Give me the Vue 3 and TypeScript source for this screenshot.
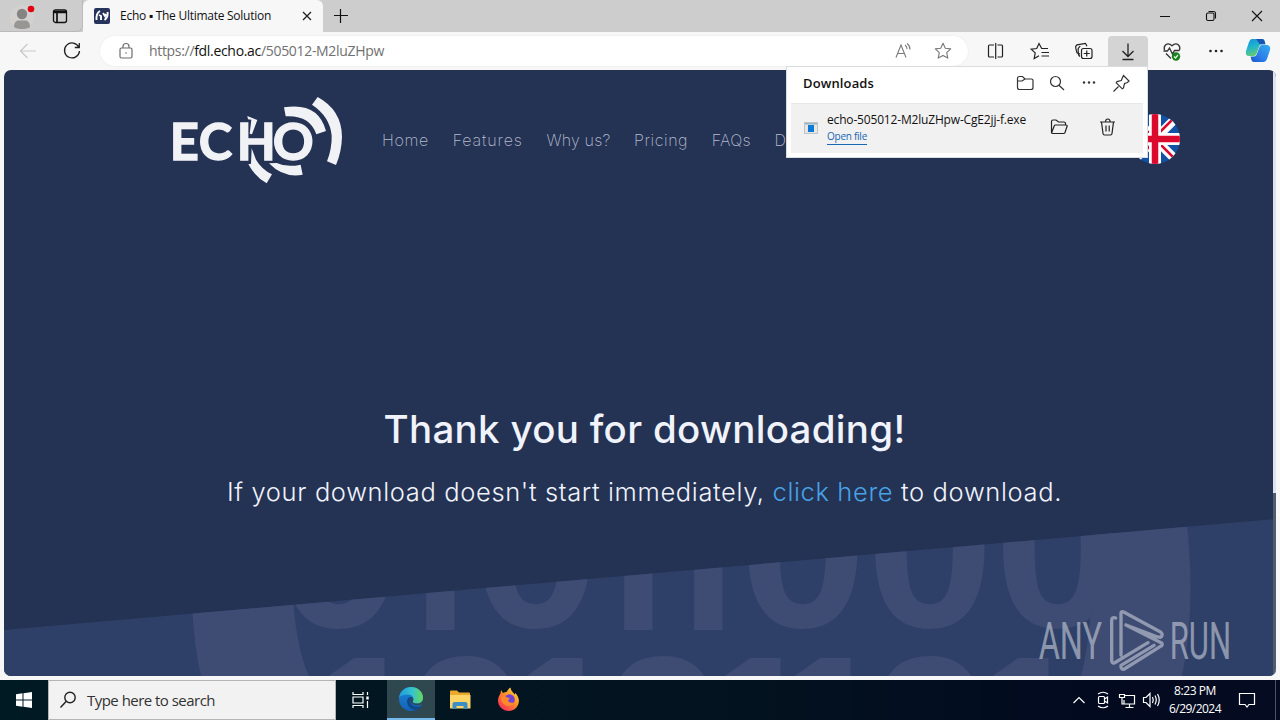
<script setup lang="ts">
import type { Directive } from 'vue'

// Tracks text so that the label spans the given number of pixels.
const vFit: Directive<HTMLElement, number> = {
  mounted(el, binding) {
    const count = (el.textContent ?? '').trim().length
    const natural = el.getBoundingClientRect().width
    const spacing = (binding.value - natural) / count
    el.style.letterSpacing = `${spacing.toFixed(3)}px`
  },
}

interface NavItem {
  label: string
  width: number
}

const nav: NavItem[] = [
  { label: 'Home', width: 47 },
  { label: 'Features', width: 70 },
  { label: 'Why us?', width: 64 },
  { label: 'Pricing', width: 54 },
  { label: 'FAQs', width: 39 },
  { label: 'D', width: 12 },
]
</script>

<template>
  <div class="desktop">
    <header class="tabbar">
      <div class="tab-tools">
        <svg class="profile" width="28" height="28" viewBox="0 0 28 28">
          <circle cx="14" cy="14" r="12" fill="#d3d1d0" />
          <circle cx="14" cy="11" r="5.2" fill="#868482" />
          <path d="M6 24c0-4 2-6.500 4.500-6.500h7c2.500 0 4.500 2.500 4.500 6.500c-4 2.800-12 2.800-16 0z" fill="#989694" />
          <circle cx="23" cy="6" r="3.300" fill="#e3000f" />
        </svg>
        <svg width="16" height="16" viewBox="0 0 16 16" fill="none" stroke="#111" stroke-width="1.300">
          <rect x="1.500" y="1.800" width="13" height="12.700" rx="2" />
          <path d="M1.500 3.300h13M2 4.500h12.500M5 5v9.500" stroke-width="1.700" />
        </svg>
      </div>
      <div class="tab">
        <svg width="16" height="16" viewBox="0 0 16 16">
          <rect width="16" height="16" rx="2" fill="#26345c" />
          <path d="M6 3Q2 5 2.500 12M5 7l2 1v4M9 5l2 3 1-2M13.500 4q1 5-3 8" stroke="#fff" stroke-width="1.900" fill="none" />
        </svg>
        <span class="tab-title"><span v-fit="151" class="t">Echo ▪ The Ultimate Solution</span></span>
        <svg class="tab-close" width="10" height="10" viewBox="0 0 10 10"><path d="M1 1l8 8M9 1l-8 8" stroke="#222" stroke-width="1.300" /></svg>
      </div>
      <svg class="new-tab" width="14" height="14" viewBox="0 0 14 14"><path d="M6.500 0v14M0 6.500h14" stroke="#111" stroke-width="1.200" /></svg>
      <div class="window-buttons">
        <svg width="46" height="32" viewBox="0 0 46 32"><path d="M18 16.500h10" stroke="#111" /></svg>
        <svg width="46" height="32" viewBox="0 0 46 32" fill="none" stroke="#111" stroke-width="1.100"><rect x="18.500" y="13" width="7.500" height="7.500" rx="1.500" /><path d="M20.500 11.500h5q2 0 2 2v5" /></svg>
        <svg width="46" height="32" viewBox="0 0 46 32"><path d="M18 11l10 10M28 11l-10 10" stroke="#111" stroke-width="1.100" /></svg>
      </div>
    </header>

    <div class="toolbar">
      <svg class="cell" viewBox="0 0 44 38" fill="none" stroke="#c9c9c9" stroke-width="1.200"><path d="M30 19H14.500M21.500 12l-7 7 7 7" /></svg>
      <svg class="cell" viewBox="0 0 44 38" fill="none" stroke="#222" stroke-width="1.300"><path d="M28.800 15.200A7.500 7.500 0 1 0 29.500 19M29.300 11v4.500h-4.500" /></svg>
      <div class="omnibox">
        <svg class="lock" width="14" height="18" viewBox="0 0 14 18" fill="none" stroke="#6c6c6c" stroke-width="1.200"><rect x="1" y="6" width="12" height="10" rx="1.500" /><path d="M4 6V4.500a3 3 0 0 1 6 0V6" /><circle cx="7" cy="11" r=".8" fill="#6c6c6c" stroke="none" /></svg>
        <span class="url"><span v-fit="235" class="t">https://<b>fdl.echo.ac</b>/505012-M2luZHpw</span></span>
        <svg class="read" width="18" height="18" viewBox="0 0 18 18" fill="none" stroke="#7a7a7a" stroke-width="1.100"><path d="M2 15.500L7 3l5 12.500M3.800 11.500h6.400M11 3q2 1.500 2 4M13 1.500q3 2 3 6" /></svg>
        <svg width="18" height="18" viewBox="0 0 18 18" fill="none" stroke="#777" stroke-width="1.100" stroke-linejoin="round"><path d="M9 1.300l2.300 5 5.400.6-4 3.700 1.100 5.500L9 13.500l-4.800 2.600 1.100-5.500-4-3.700 5.400-.6z" /></svg>
      </div>
      <div class="actions">
        <svg class="cell" viewBox="0 0 44 38" fill="none" stroke="#222" stroke-width="1.200"><path d="M20 13h-4.500q-1 0-1 1v10q0 1 1 1H20M23.500 13h4q1 0 1 1v10q0 1-1 1h-4M21.700 11v16" /></svg>
        <svg class="cell" viewBox="0 0 44 38" fill="none" stroke="#222" stroke-width="1.200"><path d="M29.500 16.500h-6.300L20.500 11.500l-2.300 5-5.500.7 4 3.700-1 5.600 4.800-2.700M23 20.500h7.500M23 24h7.500" transform="translate(.5 0)" /></svg>
        <svg class="cell" viewBox="0 0 44 38" fill="none" stroke="#222" stroke-width="1.200"><path d="M18 22l-3-1.200q-1.500-5-1.300-6.500l1.300-1.500 8.500-1.500 1.500 3" /><path d="M18 24.500q-2-1-1.800-5v-3l2-2.500" /><rect x="19.500" y="16.500" width="10.500" height="10" rx="2" fill="#f7f7f7" /><path d="M24.750 18.500v6M21.750 21.500h6" /></svg>
        <span class="cell active"><svg width="40" height="30" viewBox="0 0 40 30" fill="none" stroke="#222" stroke-width="1.300"><path d="M20 7.500v13M14.500 15l5.500 5.500 5.500-5.500M14.500 23.500h11" /></svg></span>
        <svg class="cell" viewBox="0 0 44 38" fill="none" stroke="#333" stroke-width="1.300"><path d="M14.500 18q-1-3 1-5 3-2.500 6.500.8 3.500-3.300 6.500-.8 2 2 1 5M13.500 19h4l2-3 3 6 2-3.500h5M16 21.500l5 5" /><circle cx="26" cy="24.500" r="4.200" fill="#18801f" stroke="none" /><path d="M24 24.500l1.500 1.500 2.500-3" stroke="#dff4df" /></svg>
        <svg class="cell" viewBox="0 0 44 38" fill="#222"><circle cx="16.500" cy="19" r="1.300" /><circle cx="22" cy="19" r="1.300" /><circle cx="27.500" cy="19" r="1.300" /></svg>
        <svg class="copilot" width="26" height="26" viewBox="0 0 26 26">
          <defs>
            <linearGradient id="copA" x1="0" y1="0" x2="0.400" y2="1"><stop offset="0" stop-color="#1690dc" /><stop offset=".5" stop-color="#1fb4cf" /><stop offset="1" stop-color="#67ce6f" /></linearGradient>
            <linearGradient id="copB" x1="1" y1="0" x2="0" y2="1"><stop offset="0" stop-color="#35aef0" /><stop offset=".6" stop-color="#2b7de9" /><stop offset="1" stop-color="#1757c8" /></linearGradient>
          </defs>
          <path d="M7 1h10q2 0 2.600 2l.8 3.200H17q-2 0-2.700 2L11.500 16q-.7 2-2.700 2H4Q0 18 1 13L4 4q1-3 3-3z" fill="url(#copA)" />
          <path d="M11 1h6q2 0 2.600 2l.8 3.200H16q-2 0-2.700-2z" fill="#1655b4" />
          <path d="M20 7h2.500q3.500 1 2.500 5l-3 9q-1 3-3 3H9q-2 0-2.600-2l-.8-3.500H9q2 0 2.700-2l2.800-7.500q.7-2 2.500-2z" fill="url(#copB)" />
        </svg>
      </div>
    </div>

    <main class="page">
      <svg class="backdrop" width="1272" height="606" viewBox="4 70 1272 606">
        <path d="M4 630L1276 519V676H4z" fill="#2e4068" />
        <clipPath id="slope"><path d="M4 630L1276 519V676H4z" /></clipPath>
        <g clip-path="url(#slope)" fill="#3e4b73">
          <text class="zeros" y="627" x="275 472 739 866 994">00000</text>
          <text class="ones" y="629.500" x="385 583 653">111</text>
          <text class="zeros" y="817" x="402 599 866">000</text>
          <text class="ones" y="796" x="315 513 711 781 979">11111</text>
          <path d="M192 560Q190 630 201 676H309Q292 640 292 560zM1184 500Q1198 600 1182 676H1081Q1096 620 1092 500z" />
        </g>
      </svg>
      <div class="site-header">
        <svg class="logo" width="200" height="110" viewBox="0 0 600 330" fill="#f1f2f6">
          <text y="225" x="29 116 230 338">ECHO</text>
          <path d="M473 36Q545 75 546 155Q545 200 528 240L501 229Q516 190 515 152Q510 95 456 59Z" />
          <path d="M372 67Q475 50 498 138L469 148Q450 90 377 94Z" />
          <path d="M327 235L350 234Q380 248 422 239L428 269Q370 280 327 235Z" />
          <path d="M275 190L288 224Q305 253 336 268L320 295Q285 275 265 238L273 236Z" />
          <path d="M262 93L292 105L276 148L269 146L274 104L264 103Z" />
        </svg>
        <nav class="nav">
          <a v-for="item in nav" :key="item.label" v-fit="item.width" class="t">{{ item.label }}</a>
        </nav>
        <svg class="flag" width="50" height="50" viewBox="0 0 50 50">
          <clipPath id="round"><circle cx="25" cy="25" r="25" /></clipPath>
          <g clip-path="url(#round)">
            <path d="M0 0h50v50H0z" fill="#1152a5" />
            <path d="M0 0l50 50M50 0L0 50" stroke="#fff" stroke-width="9" />
            <path d="M25 27L2 50M25 23L50-2M25 25l25 25M25 25L0 0" stroke="#d90a2c" stroke-width="2.500" />
            <path d="M25 0v50M0 25h50" stroke="#fff" stroke-width="12" />
            <path d="M25 0v50M0 25h50" stroke="#dc0a2d" stroke-width="6.500" />
          </g>
        </svg>
      </div>
      <section class="message">
        <h1><span v-fit="522" class="t">Thank you for downloading!</span></h1>
        <p><span v-fit="835" class="t">If your download doesn't start immediately, <a>click here</a> to download.</span></p>
      </section>
      <svg class="watermark" width="200" height="66" viewBox="50 24 600 198">
        <text x="58" y="178" textLength="190" lengthAdjust="spacingAndGlyphs">ANY</text>
        <text x="451" y="178" textLength="184" lengthAdjust="spacingAndGlyphs">RUN</text>
        <path d="M305 165V39q0-6 8-3l112 61q8 8-2 15l-12-2L320 75M289 54q-12-4-12 8V181q0 10 8 8l101-61M320 75l107 54q3 4 0 8L315 207q-8 4-10-6v-5l99-60" />
      </svg>
      <div class="scrollbar"><i></i></div>
    </main>

    <aside class="downloads">
      <div class="dl-head">
        <strong><span v-fit="71" class="t">Downloads</span></strong>
        <svg width="128" height="32" viewBox="0 0 128 32" fill="none" stroke="#333" stroke-width="1.200">
          <path d="M8.500 11.500q0-2 2-2h3l2.500 2.500h6.500q1.500 0 1.500 1.500v7q0 2-2 2H10.500q-2 0-2-2zM9 14h4l3-2" />
          <circle cx="46.500" cy="14.500" r="5" /><path d="M50 18.300l5 4.700" />
          <g fill="#333" stroke="none"><circle cx="75" cy="15.500" r="1.200" /><circle cx="80" cy="15.500" r="1.200" /><circle cx="85" cy="15.500" r="1.200" /></g>
          <path d="M114.500 8.500l5.500 5.500-1.500 1.500-3 1-1 4.500-1.200.8-6-6 .7-1.200 4.300-1.100 1.200-3zM109.500 19.500l-5 5" />
        </svg>
      </div>
      <div class="dl-item">
        <svg class="exe" width="14" height="12" viewBox="0 0 14 12"><rect x=".5" y=".5" width="13" height="11" fill="#e9e6df" stroke="#bdc6ca" /><path d="M1 1h12v1.500H1z" fill="#9bb4c4" /><rect x="4" y="3" width="6" height="7" fill="#0a7bdb" /></svg>
        <div class="dl-text">
          <span v-fit="199" class="t name">echo-505012-M2luZHpw-CgE2jj-f.exe</span>
          <a><span v-fit="40" class="t">Open file</span></a>
        </div>
        <svg class="dl-actions" width="72" height="24" viewBox="0 0 72 24" fill="none" stroke="#222" stroke-width="1.200">
          <path d="M3.500 18V6.500q0-1.500 1.500-1.500h3l2.500 2H16q1.500 0 1.500 1.500V10M3.500 18l2.700-7q.3-1 1.300-1H18q1.500 0 1 1.500l-2 6q-.4 1-1.500 1H5q-1.500 0-1.500-1" />
          <path d="M52 7h15M57.500 7q0-3 2.300-3t2.300 3M53.500 7l1.500 11.500q.2 1.500 1.500 1.500h6q1.300 0 1.500-1.500L65.500 7M58 10.500v6M61.200 10.500v6" />
        </svg>
      </div>
    </aside>

    <footer class="taskbar">
      <svg class="start" width="48" height="40" viewBox="0 0 48 40" fill="#fff"><path d="M16 14.200l6.500-.9v6.200H16zM23.500 13.200L32 12v7.500h-8.500zM16 20.500h6.500v6.200l-6.500-.9zM23.500 20.500H32V28l-8.500-1.200z" /></svg>
      <div class="search">
        <svg width="18" height="18" viewBox="0 0 18 18" fill="none" stroke="#222" stroke-width="1.400"><circle cx="11" cy="6.500" r="5.200" /><path d="M7.300 10.200L1.500 16.500" /></svg>
        <span class="t" v-fit="128">Type here to search</span>
      </div>
      <svg class="app" viewBox="0 0 48 40" fill="none" stroke="#fff" stroke-width="1.200"><path d="M16 12v2.500h10V12M16 28v-2.500h10V28M16 17h10v6H16zM30.500 12v3M30.500 21v7" /><rect x="29.300" y="16.500" width="2.400" height="3" fill="#fff" stroke="none" /></svg>
      <div class="app edge">
        <svg width="24" height="24" viewBox="0 0 24 24">
          <defs>
            <linearGradient id="edgeA" x1="0" y1="0.500" x2="1" y2="0.500"><stop offset="0" stop-color="#1f9bdc" /><stop offset=".55" stop-color="#35c2d0" /><stop offset="1" stop-color="#67d957" /></linearGradient>
            <linearGradient id="edgeB" x1="0" y1="0" x2="0" y2="1"><stop offset="0" stop-color="#1b87d8" /><stop offset="1" stop-color="#1462b8" /></linearGradient>
          </defs>
          <circle cx="12" cy="12" r="12" fill="url(#edgeB)" />
          <path d="M0 11C1 4 6 0 12 0c7 0 12 5 12 10.500 0 4-3 6-6 6-4 0-5-1.500-4-3 1.500-2-.5-6-5-6C4 7.500 1 9 0 11z" fill="url(#edgeA)" />
          <path d="M9 11c-3 5 1 12 8 12 2-.5 4-2 5.500-4-6 2-11-.5-11-5 0-2 1-3 1.500-3.500-1.500-.8-3-.5-4 .5z" fill="#114a8b" />
          <path d="M13 10.500c-2 1-2 4 0 6 3 2.500 7 2 9 1l1 0 1-1v-3c-2 3-4 3-6 3-4 0-5-1.500-4-3 .8-1.200 0-2.500-1-3z" fill="#2f4850" />
        </svg>
      </div>
      <svg class="app" viewBox="0 0 48 40"><path d="M14 11.500q0-1 1-1h6l2 2h10q1 0 1 1v14H14z" fill="#e8a92c" /><path d="M14 15h20.500v13.500H14z" fill="#fdd566" /><path d="M16.500 29v-5q0-2 2-2h11q2 0 2 2v5h-4v-3h-7v3z" fill="#3c8fc6" /></svg>
      <svg class="app" viewBox="0 0 48 40">
        <defs><linearGradient id="fox" x1="1" y1="0" x2="0.200" y2="1"><stop offset="0" stop-color="#ffe54a" /><stop offset=".45" stop-color="#ff9a22" /><stop offset="1" stop-color="#f7285e" /></linearGradient></defs>
        <path d="M16 11l2 3q2-1 3.500-1 2-3.500 4-4.500 0 2.500 2.500 5 1 1 1.500 2l1-1.500q4 5 3.300 9C33 28.500 29 32 24 32c-6 0-11-4.500-11-10.500 0-3 1.500-5.500 2.500-7z" fill="url(#fox)" transform="translate(0 -1)" />
        <circle cx="24.500" cy="19.500" r="5.300" fill="#7143d3" /><path d="M16 17q3-2 6 .5l3 .5-2 2.500q1 3 6 2-3 4.500-8 3-5-2-5-8.500z" fill="#ff8a2c" />
      </svg>
      <div class="tray">
        <svg width="104" height="40" viewBox="0 0 104 40" fill="none" stroke="#fff" stroke-width="1.200">
          <path d="M13.500 23l5.500-5.500 5.500 5.500" />
          <rect x="38.500" y="16.500" width="6" height="7" rx="1" /><path d="M44.500 19l3-2v6l-3-2M38 14q5-3.500 10 0M38 26q5 3.500 10 0" />
          <path d="M65 15.500h9.500v8.500H64v-4M69.500 24v3M65.500 27.500h8M59.500 14.500h5v3h-5zM62 17.500v6.500h2" />
          <path d="M83.500 17.500v5h2.500l4 4v-13l-4 4zM92.500 17q1.500 3 0 6M95 15.500q2.500 4.500 0 9M97.500 14q3.500 6 0 12" />
        </svg>
        <div class="clock"><span class="t" v-fit="42">8:23 PM</span><span class="t" v-fit="52">6/29/2024</span></div>
        <svg class="notify" width="18" height="18" viewBox="0 0 18 18" fill="none" stroke="#fff" stroke-width="1.200"><path d="M1.500 2.500h15v11H11l-2 2.500-2-2.500H1.500z" /></svg>
        <i class="peek"></i>
      </div>
    </footer>
  </div>
</template>

<style>
body { overflow: hidden; }
</style>

<style scoped>
* { box-sizing: border-box; }
.desktop { position: relative; width: 1280px; height: 720px; display: flex; flex-direction: column; background: #f7f7f7; overflow: hidden; font-family: "Open Sans", "Noto Sans", sans-serif; color: #111; }
.t { display: inline-block; white-space: pre; }
svg { display: block; flex: none; }

.tabbar { height: 32px; display: flex; align-items: center; background: #cdcdcd; }
.tab-tools { width: 83px; height: 32px; padding-left: 8px; display: flex; align-items: center; gap: 16px; border-radius: 0 0 6px 0; border-right: 1px solid #bababa; border-bottom: 1px solid #bababa; }
.profile { margin-top: 2px; }
.tab { width: 240px; height: 32px; background: #f7f7f7; display: flex; align-items: center; padding-left: 11px; border-radius: 6px 6px 0 0; font-size: 12px; }
.tab-title { width: 182px; margin-left: 10px; line-height: 32px; }
.new-tab { margin-left: 11px; }
.window-buttons { display: flex; margin-left: auto; }

.toolbar { height: 38px; display: flex; align-items: center; padding-left: 6px; }
.cell { width: 44px; height: 38px; }
.omnibox { width: 868px; height: 30px; margin-left: 6px; border-radius: 15px; background: #fff; box-shadow: 0 0 2px #e5e5e5; display: flex; align-items: center; padding: 0 16px 0 19px; }
.url { flex: 1; margin-left: 16px; font-size: 14px; line-height: 28px; color: #707070; }
.url b { font-weight: 400; color: #111; }
.read { margin-right: 22px; }
.actions { display: flex; align-items: center; margin-left: 6px; }
.active { display: flex; align-items: center; justify-content: center; }
.active svg { background: #d4d4d4; border-radius: 4px 4px 0 0; }
.copilot { margin-left: 7px; }

.page { position: relative; width: 1272px; height: 606px; margin-left: 4px; border-radius: 7px; overflow: hidden; background: #243253; }
.backdrop { position: absolute; left: 0; top: 0; }
.zeros { font: 700 230px "Liberation Sans", sans-serif; }
.ones { font: 700 190px Inter, sans-serif; }
.site-header { position: relative; height: 125px; display: flex; padding: 15px 96px 0 156px; }
.logo text { font: 700 152px Lato, sans-serif; stroke: #f1f2f6; stroke-width: 4px; }
.nav { display: flex; gap: 23.700px; margin-left: 22px; padding-top: 43px; font: 200 16px/24px Inter, sans-serif; color: #b4bccf; }
.flag { margin: 29px 0 0 auto; }
.message { position: relative; margin-top: 204px; padding-left: 9px; text-align: center; color: #f0f3fb; font-family: Inter, sans-serif; }
h1 { margin: 0; font-size: 38.500px; line-height: 60px; font-weight: 500; }
p { margin: 13px 0 0; font-size: 25.500px; line-height: 40px; font-weight: 300; }
p a { color: #48a2e6; }
.watermark { position: absolute; left: 1032px; top: 538px; opacity: .62; fill: #c5cad6; }
.watermark text { font: 400 156px Roboto, sans-serif; }
.watermark path { fill: none; stroke: #c5cad6; stroke-width: 10; stroke-linejoin: round; stroke-linecap: round; }
.scrollbar { position: absolute; right: 0; top: 0; width: 3px; height: 606px; padding-top: 423px; background: #dfe3ec; }
.scrollbar i { display: block; height: 183px; background: #4f5c6c; }

.downloads { position: absolute; left: 786px; top: 66px; width: 362px; height: 92px; background: #fff; border: 1px solid #d9dce1; padding: 0 4px; }
.dl-head { height: 37px; display: flex; align-items: center; padding: 0 6px 4px 12px; border-bottom: 1px solid #e8e8e8; }
.dl-head strong { flex: 1; font-size: 13px; font-weight: 600; line-height: 30px; }
.dl-item { height: 49px; background: #f1f1f1; display: flex; align-items: center; padding: 0 25px 2px 13px; }
.dl-text { width: 199px; margin: 0 22px 0 9px; display: flex; flex-direction: column; align-items: flex-start; font-size: 12px; }
.name { line-height: 17px; }
.dl-text a { font-size: 10px; line-height: 14px; height: 16px; color: #1767b1; border-bottom: 1px solid #1767b1; margin-top: 1px; }
.dl-actions { margin-bottom: 1px; }

.taskbar { height: 40px; margin-top: 4px; display: flex; align-items: center; background: linear-gradient(90deg, #001a24, #03131f 55%, #020a1f 85%, #050b20); color: #fff; }
.search { width: 288px; height: 40px; background: #f2f2f2; border: 1px solid #b5b5b5; display: flex; align-items: center; gap: 10px; padding-left: 10px; font-size: 15px; color: #333; }
.app { width: 48px; height: 40px; margin-left: 1px; }
.app:nth-child(3) { margin-left: 1px; margin-right: 1px; }
.edge { display: flex; align-items: center; justify-content: center; background: #2f4850; border-bottom: 2px solid #76b9ed; }
.tray { margin-left: auto; display: flex; align-items: center; height: 40px; }
.clock { width: 60px; margin-left: 1px; display: flex; flex-direction: column; align-items: center; font-size: 12px; line-height: 18px; padding-bottom: 1px; }
.notify { margin-left: 13px; }
.peek { width: 5px; height: 40px; margin-left: 19px; border-left: 1px solid #4b5361; }
</style>
